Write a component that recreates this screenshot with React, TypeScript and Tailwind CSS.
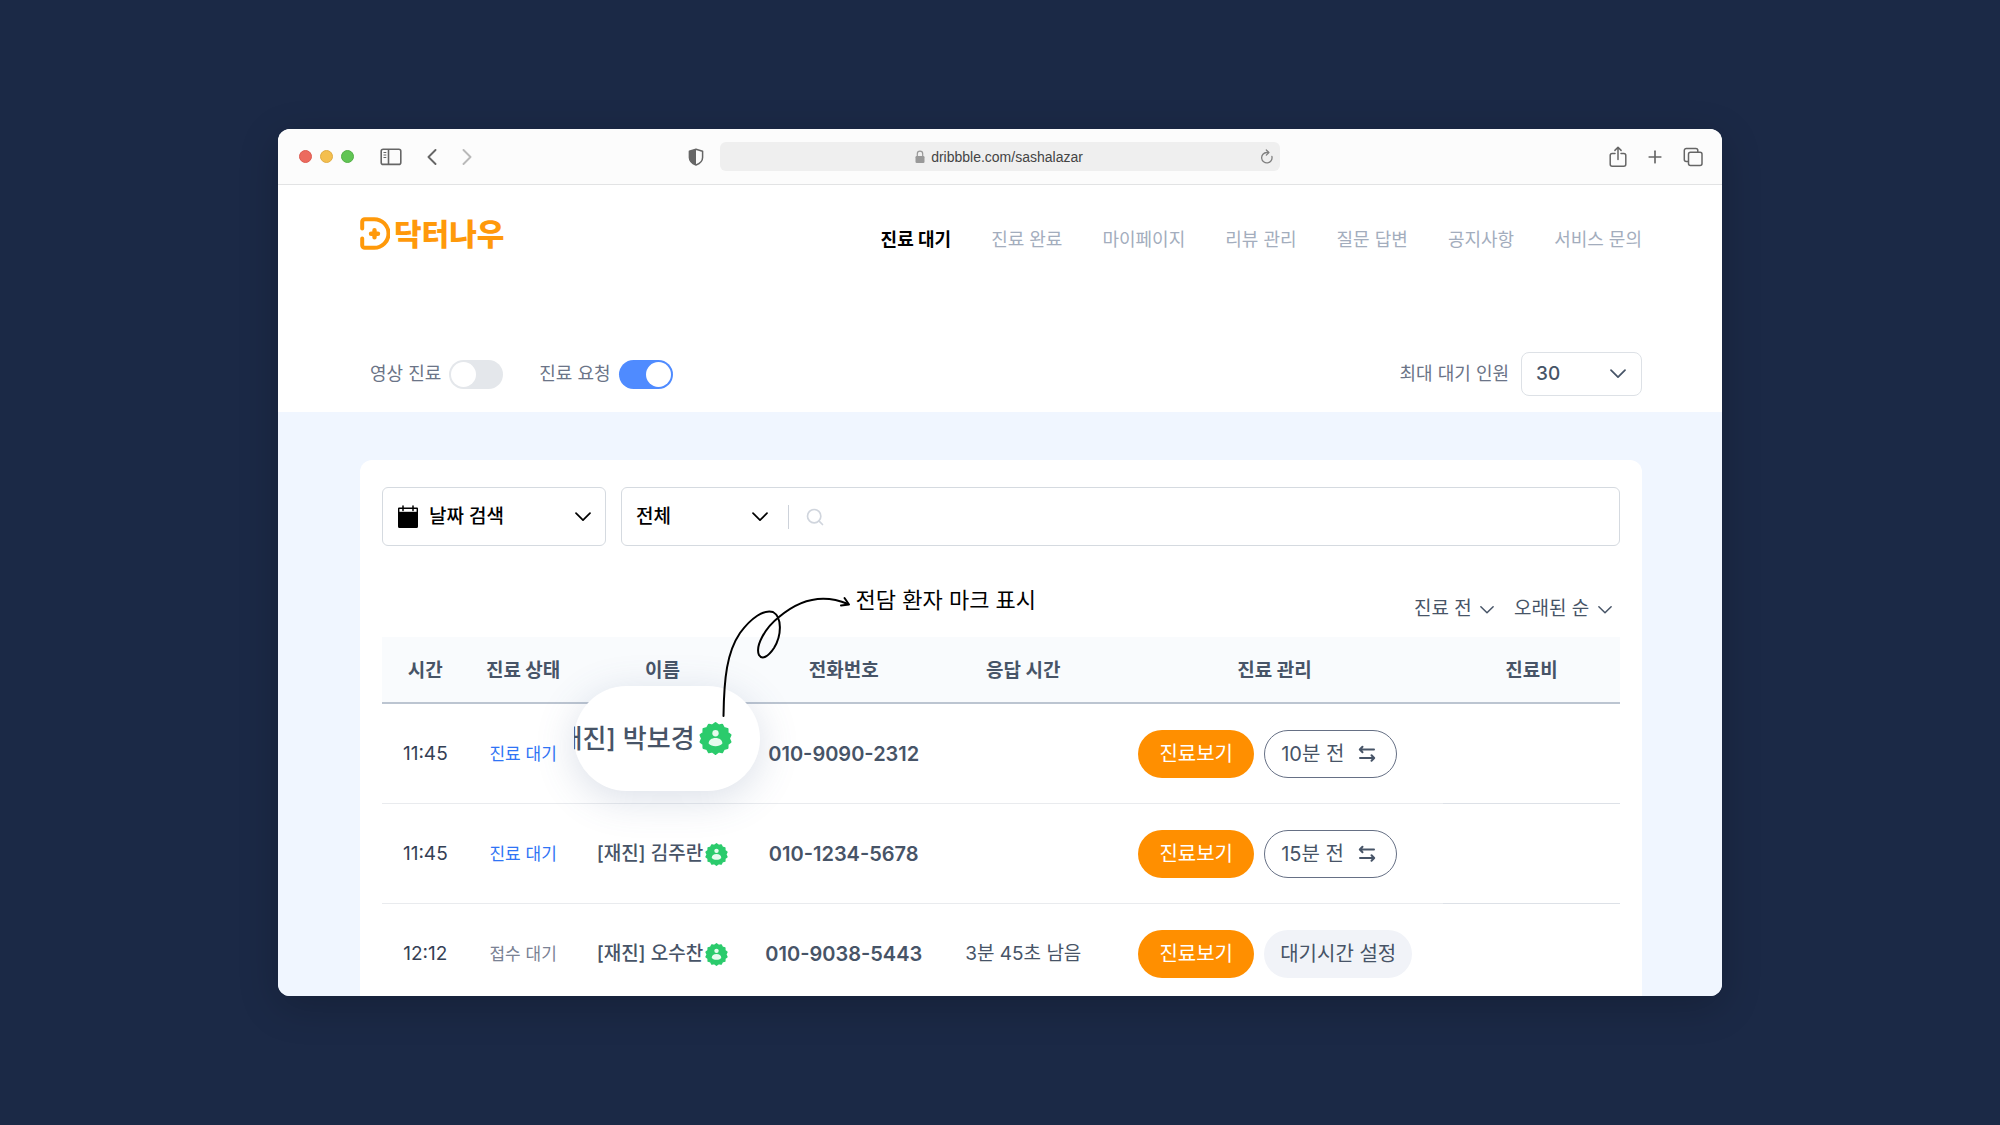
import { useState } from 'react';
import type { ReactNode } from 'react';
import { Plus, Search } from 'lucide-react';

const navItems = ['진료 대기', '진료 완료', '마이페이지', '리뷰 관리', '질문 답변', '공지사항', '서비스 문의'];

const columns = [
  { label: '시간', width: 'w-[7%]' },
  { label: '진료 상태', width: 'w-[8.8%]' },
  { label: '이름', width: 'w-[13.7%]' },
  { label: '전화번호', width: 'w-[15.6%]' },
  { label: '응답 시간', width: 'w-[13.4%]' },
  { label: '진료 관리', width: 'w-[27.2%]' },
  { label: '진료비', width: 'w-[14.3%]' },
];

const patients = [
  { time: '11:45', status: '진료 대기', active: true, name: '박보경', phone: '010-9090-2312', response: '', wait: '10분 전', zoomed: true },
  { time: '11:45', status: '진료 대기', active: true, name: '김주란', phone: '010-1234-5678', response: '', wait: '15분 전', zoomed: false },
  { time: '12:12', status: '접수 대기', active: false, name: '오수찬', phone: '010-9038-5443', response: '3분 45초 남음', wait: '', zoomed: false },
];

// 14-lobed seal outline, alternating outer and inner radius
const sealPoints = Array.from({ length: 28 }, (_, i) => {
  const r = i % 2 === 0 ? 11.2 : 9.8;
  const a = (Math.PI * i) / 14 - Math.PI / 2;
  return `${(12 + r * Math.cos(a)).toFixed(2)},${(12 + r * Math.sin(a)).toFixed(2)}`;
}).join(' ');

const PatientMark = ({ className }: { className: string }) => (
  <svg viewBox="0 0 24 24" className={className} aria-hidden="true">
    <polygon points={sealPoints} fill="#2bcb6c" stroke="#2bcb6c" strokeWidth="1.4" strokeLinejoin="round" />
    <circle cx="12" cy="8.2" r="2.3" fill="#e6fbee" />
    <path d="M7 15.600c0-2.500 2.100-4 5-4s5 1.500 5 4c-1.200 1.400-3 2-5 2s-3.800-.6-5-2z" fill="#e6fbee" />
  </svg>
);

const Chevron = ({ className }: { className: string }) => (
  <svg viewBox="0 0 16 10" fill="none" stroke="currentColor" strokeWidth="1.700" strokeLinecap="round" strokeLinejoin="round" className={className} aria-hidden="true">
    <path d="M1 1.200l7 7 7-7" />
  </svg>
);

const Toggle = ({ label, defaultOn }: { label: string; defaultOn: boolean }) => {
  const [on, setOn] = useState(defaultOn);
  return (
    <label className="flex cursor-pointer items-center gap-2 text-lg text-[#6b7487]">
      {label}
      <input type="checkbox" role="switch" checked={on} onChange={() => setOn(!on)} className="peer sr-only" />
      <span className="flex h-[29px] w-[54px] items-center rounded-full bg-[#e4e7eb] px-0.5 peer-checked:justify-end peer-checked:bg-[#4f8bff]">
        <span className="size-[25px] rounded-full bg-white" />
      </span>
    </label>
  );
};

const Dropdown = ({ label, options, className, icon }: { label: string; options: string[]; className: string; icon: string }) => (
  <div className="grid items-center">
    <select aria-label={label} className={`col-start-1 row-start-1 appearance-none bg-transparent outline-none ${className}`}>
      {options.map((option) => (
        <option key={option}>{option}</option>
      ))}
    </select>
    <Chevron className={`pointer-events-none col-start-1 row-start-1 justify-self-end ${icon}`} />
  </div>
);

const IconButton = ({ label, children }: { label: string; children: ReactNode }) => (
  <button aria-label={label} className="flex items-center justify-center">
    {children}
  </button>
);

const BrowserBar = () => (
  <div className="grid h-14 shrink-0 grid-cols-[1fr_minmax(0,560px)_1fr] items-center border-b border-[#e2e3e4] bg-[#fcfcfc] text-[#666]">
    <div className="flex items-center pr-4 pl-[21px]">
      <div className="flex gap-2">
        <span className="size-[13px] rounded-full border border-[#dd5a50] bg-[#ec6a5e]" />
        <span className="size-[13px] rounded-full border border-[#e0ac43] bg-[#f4bf4f]" />
        <span className="size-[13px] rounded-full border border-[#53b046] bg-[#61c554]" />
      </div>
      <div className="ml-[26px] flex items-center gap-[25px]">
        <IconButton label="사이드바">
          <svg viewBox="0 0 22 18" className="h-[18px] w-[22px]" fill="none" stroke="currentColor" strokeWidth="1.600">
            <rect x="1.200" y="1.200" width="19.600" height="15.200" rx="2" />
            <path d="M8.500 1.200v15.200" />
            <path d="M3.500 4.500h2.800M3.500 7h2.800M3.500 9.500h2.800" strokeWidth="1" />
          </svg>
        </IconButton>
        <IconButton label="뒤로">
          <svg viewBox="0 0 10 16" className="h-4 w-2.5" fill="none" stroke="currentColor" strokeWidth="1.900" strokeLinecap="round" strokeLinejoin="round">
            <path d="M8.500 1L1.500 8l7 7" />
          </svg>
        </IconButton>
        <IconButton label="앞으로">
          <svg viewBox="0 0 10 16" className="h-4 w-2.5" fill="none" stroke="#b9b9b9" strokeWidth="1.900" strokeLinecap="round" strokeLinejoin="round">
            <path d="M1.500 1l7 7-7 7" />
          </svg>
        </IconButton>
      </div>
      <svg viewBox="0 0 16 18" className="ml-auto h-[18px] w-4" aria-hidden="true">
        <path d="M8 1.200l6.600 2v6.200c0 3.500-2.500 5.900-6.600 7.600-4.100-1.700-6.600-4.100-6.600-7.600V3.200z" fill="none" stroke="currentColor" strokeWidth="1.500" strokeLinejoin="round" />
        <path d="M8 1.200v15.800c-4.100-1.700-6.600-4.100-6.600-7.600V3.200z" fill="currentColor" />
      </svg>
    </div>
    <div className="flex h-[29px] items-center rounded-md bg-[#efefef] px-1.5 font-['Liberation_Sans',sans-serif] text-sm text-[#444]">
      <div className="flex flex-1 items-center justify-center gap-1.5 pl-3">
        <svg viewBox="0 0 10 14" className="h-3.5 w-2.5" aria-hidden="true">
          <path d="M2.300 7V3.800a2.700 2.700 0 0 1 5.400 0V7" fill="none" stroke="#999" strokeWidth="1.200" />
          <rect x="0.500" y="6" width="9" height="7" rx="1.200" fill="#999" />
        </svg>
        <span>dribbble.com/sashalazar</span>
      </div>
      <IconButton label="새로고침">
        <svg viewBox="0 0 14 16" className="h-4 w-3.5" fill="none" stroke="#808080" strokeWidth="1.300" strokeLinecap="round" strokeLinejoin="round">
          <path d="M11.900 7.500a5.200 5.200 0 1 1-5.200-4h1.800" />
          <path d="M6.300 1l2.600 2.500-2.600 2.600" />
        </svg>
      </IconButton>
    </div>
    <div className="flex items-center justify-end gap-[18px] pr-[19px]">
      <IconButton label="공유">
        <svg viewBox="0 0 18 22" className="h-[22px] w-[18px]" fill="none" stroke="currentColor" strokeWidth="1.500" strokeLinecap="round" strokeLinejoin="round">
          <path d="M6 7.500H3.200a2 2 0 0 0-2 2v8.800a2 2 0 0 0 2 2h11.600a2 2 0 0 0 2-2V9.500a2 2 0 0 0-2-2H12" />
          <path d="M9 13.500V1.500M5.900 4.400L9 1.300l3.100 3.100" />
        </svg>
      </IconButton>
      <IconButton label="새 탭">
        <Plus className="size-5" strokeWidth={2} />
      </IconButton>
      <IconButton label="탭 보기">
        <svg viewBox="0 0 20 20" className="size-5" fill="none" stroke="currentColor" strokeWidth="1.500">
          <path d="M5 14.500H3.300a2 2 0 0 1-2-2v-9a2 2 0 0 1 2-2h9.500a2 2 0 0 1 2 2V5" />
          <rect x="5.500" y="5.300" width="13.500" height="13.200" rx="2" />
        </svg>
      </IconButton>
    </div>
  </div>
);

const Logo = () => (
  <a href="#" className="mb-0.5 flex items-center gap-1 text-[#ff990a]">
    <svg viewBox="0 0 30 33" className="h-[33px] w-[30px]" aria-hidden="true">
      <path d="M2.200 11.500V4.800a2.600 2.600 0 0 1 2.600-2.600h9.400a14.300 14.300 0 0 1 0 28.600H4.800a2.600 2.600 0 0 1-2.600-2.600v-6.700" fill="none" stroke="currentColor" strokeWidth="4" strokeLinecap="round" strokeLinejoin="round" />
      <path d="M14.500 13.200v7M11 16.700h7" stroke="currentColor" strokeWidth="4.400" strokeLinecap="round" />
    </svg>
    <span className="text-[30px] leading-8 font-black">닥터나우</span>
  </a>
);

const MarkNote = () => (
  <div className="pointer-events-none absolute -top-[114px] left-[138px] z-20 flex items-start">
    <svg viewBox="0 0 140 130" className="h-[130px] w-[140px] shrink-0" fill="none" stroke="#000" strokeWidth="2" strokeLinecap="round" strokeLinejoin="round" aria-hidden="true">
      <path d="M7.500 126C8 88 11 62 24 43C35 28 48 19 57 22C66 27 66 45 58 58C52 67 46 70 43 65C39 56 49 38 63 27C83 10 106 3 132 14" />
      <path d="M128.500 8l4.500 6.500-8 1" />
    </svg>
    <span className="-mt-2 text-[22px] leading-9 font-normal whitespace-nowrap text-black">전담 환자 마크 표시</span>
  </div>
);

const ZoomedName = ({ name }: { name: string }) => (
  <div className="absolute -top-[18px] -left-1 z-10 flex h-[105px] w-[186px] items-center justify-end gap-1 rounded-full bg-white pr-7 shadow-[0_8px_40px_rgba(71,94,140,0.2)]">
    <div className="flex min-w-0 flex-1 justify-end overflow-hidden">
      <span className="text-[26px] font-medium whitespace-nowrap">[재진] {name}</span>
    </div>
    <PatientMark className="size-[33px] shrink-0" />
  </div>
);

const App = () => {
  const [activeNav, setActiveNav] = useState(navItems[0]);

  return (
    <div className="flex h-screen flex-col bg-[#1b2946] px-[278px] py-[129px] font-['Inter','Noto_Sans_CJK_KR',sans-serif]">
      <div className="flex min-h-0 flex-1 flex-col overflow-hidden rounded-xl bg-white shadow-[0_10px_40px_rgba(0,0,0,0.2)]">
        <BrowserBar />

        <header className="pt-8 pr-20 pb-4 pl-[82px]">
          <div className="flex items-end justify-between">
            <Logo />
            <nav className="flex gap-10 text-lg leading-6">
              {navItems.map((item) => (
                <a
                  key={item}
                  href="#"
                  onClick={() => setActiveNav(item)}
                  className={activeNav === item ? 'font-bold text-black' : 'text-[#a3adbd]'}
                >
                  {item}
                </a>
              ))}
            </nav>
          </div>

          <div className="mt-[100px] flex items-center justify-between pl-2.5">
            <div className="flex gap-9">
              <Toggle label="영상 진료" defaultOn={false} />
              <Toggle label="진료 요청" defaultOn={true} />
            </div>
            <div className="flex items-center gap-3 text-lg text-[#6b7487]">
              <span>최대 대기 인원</span>
              <Dropdown
                label="최대 대기 인원"
                options={['30', '20', '10']}
                className="h-11 w-[121px] rounded-lg border border-[#dde1e6] pl-3.5 text-[19px] font-medium text-[#475467]"
                icon="mr-4 h-2.5 w-4 text-[#475467]"
              />
            </div>
          </div>
        </header>

        <main className="flex-1 bg-[#f0f6ff] pt-12 pr-20 pl-[82px]">
          <div className="rounded-xl bg-white px-[22px] pt-[27px] pb-6">
            <div className="flex gap-[15px]">
              <button className="flex h-[59px] w-56 items-center gap-2.5 rounded-md border border-[#d5dae0] px-3.5 text-[19px] font-medium text-black">
                <svg viewBox="0 0 22 24" className="h-6 w-[22px]" aria-hidden="true">
                  <path d="M2 2.500h18a1 1 0 0 1 1 1v18a1.500 1.500 0 0 1-1.500 1.500h-17A1.500 1.500 0 0 1 1 21.500v-18a1 1 0 0 1 1-1z" />
                  <path d="M2.400 4h17.200v2.800H2.400z" fill="#fff" />
                  <path d="M6 1v4.500M16 1v4.500" stroke="#000" strokeWidth="1.500" strokeLinecap="round" />
                </svg>
                <span className="pt-0.5">날짜 검색</span>
                <Chevron className="ml-auto h-2.5 w-4" />
              </button>
              <div className="flex h-[59px] flex-1 items-center rounded-md border border-[#d5dae0]">
                <Dropdown
                  label="검색 조건"
                  options={['전체', '이름', '전화번호']}
                  className="h-14 w-40 pt-0.5 pl-3.5 text-[19px] font-medium text-black"
                  icon="mr-3.5 h-2.5 w-4 text-black"
                />
                <span className="ml-1.5 h-6 w-px bg-[#cdd2da]" />
                <label className="flex flex-1 items-center gap-3 pl-4">
                  <Search className="size-5 text-[#d0d5dd]" strokeWidth={2} />
                  <input type="text" aria-label="검색" className="h-14 flex-1 outline-none" />
                </label>
              </div>
            </div>

            <div className="mt-12 mb-3 flex h-[31px] items-center justify-end gap-5 pr-2 text-[19px] text-[#475467]">
              <Dropdown label="진료 상태 필터" options={['진료 전', '진료 후']} className="w-20" icon="h-2.5 w-3.5" />
              <Dropdown label="정렬" options={['오래된 순', '최신 순']} className="w-[98px]" icon="h-2.5 w-3.5" />
            </div>

            <table className="w-full table-fixed border-separate border-spacing-0 text-center text-[19px] text-[#475467]">
              <thead>
                <tr>
                  {columns.map((column) => (
                    <th key={column.label} className={`h-[67px] border-b-2 border-[#bcc5d1] bg-[#f9fbfd] px-0 pt-1 pb-0 font-bold ${column.width}`}>
                      {column.label}
                    </th>
                  ))}
                </tr>
              </thead>
              <tbody>
                {patients.map((patient) => (
                  <tr key={patient.phone} className="*:h-[100px] *:border-b *:border-[#e9ebee] *:px-0 *:pt-0.5 *:pb-0">
                    <td className="text-[#344054]">{patient.time}</td>
                    <td className={`text-[17px] ${patient.active ? 'text-[#2f74f5]' : 'text-[#7a8294]'}`}>{patient.status}</td>
                    <td className="relative z-10 font-medium">
                      {patient.zoomed ? (
                        <>
                          <ZoomedName name={patient.name} />
                          <MarkNote />
                        </>
                      ) : (
                        <span className="flex items-center justify-center gap-0.5 whitespace-nowrap">
                          [재진] {patient.name}
                          <PatientMark className="size-[23px]" />
                        </span>
                      )}
                    </td>
                    <td className="pt-0! text-xl font-semibold">{patient.phone}</td>
                    <td>{patient.response}</td>
                    <td className="pt-0!">
                      <div className="flex gap-2.5 pl-8 text-xl font-normal">
                        <button className="h-12 w-[116px] rounded-full bg-[#ff8f00] text-white">진료보기</button>
                        {patient.wait ? (
                          <button className="flex h-12 w-[133px] items-center gap-3.5 rounded-full border border-[#667085] px-4">
                            {patient.wait}
                            <svg viewBox="0 0 18 18" className="size-[18px]" fill="none" stroke="currentColor" strokeWidth="2" strokeLinecap="round" strokeLinejoin="round" aria-hidden="true">
                              <path d="M16 4.500H2M4.500 1.800L1.800 4.500l2.700 2.700M2 13h14M13.500 10.300l2.700 2.700-2.700 2.700" />
                            </svg>
                          </button>
                        ) : (
                          <button className="h-12 rounded-full bg-[#f1f3f8] px-4">대기시간 설정</button>
                        )}
                      </div>
                    </td>
                    <td className="border-[#dde1e7]!" />
                  </tr>
                ))}
              </tbody>
            </table>
          </div>
        </main>
      </div>
    </div>
  );
};

export default App;
